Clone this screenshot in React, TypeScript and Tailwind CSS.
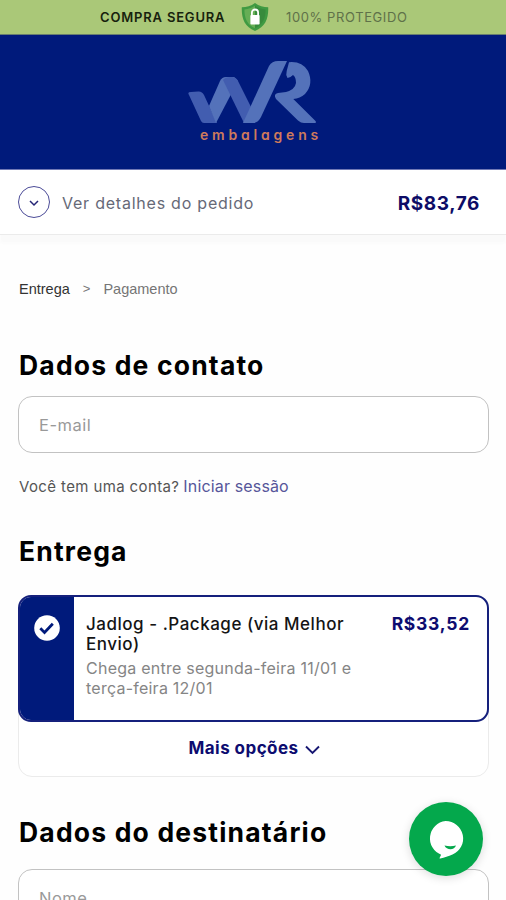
import React from 'react';

const checkoutSteps = [
  { label: 'Entrega', active: true },
  { label: 'Pagamento', active: false }
];

function ShieldIcon() {
  return (
    <svg width="28" height="30" viewBox="0 0 28 30" fill="none">
      <path d="M14 1C10 4 5.500 5 .8 5.200C.3 16 3.500 25 14 29C24.500 25 27.700 16 27.200 5.200C22.500 5 18 4 14 1Z" fill="#3f9a42" />
      <path d="M14 3.800C10.800 6.100 7.200 7.200 3.400 7.500C3.400 16 6 22.700 14 26.200Z" fill="#66ae55" />
      <path d="M14 3.800C17.200 6.100 20.800 7.200 24.600 7.500C24.600 16 22 22.700 14 26.200Z" fill="#388b3c" />
      <path d="M10.900 14V10.600a3.100 3.100 0 0 1 6.200 0V14" stroke="#fff" strokeWidth="1.800" />
      <rect x="9.400" y="13" width="9.200" height="9.500" rx=".8" fill="#fff" />
    </svg>
  );
}

function BrandLogo() {
  return (
    <div className="flex flex-col items-center">
      <svg width="130" height="64" viewBox="0 0 130 64" fill="none">
        <path d="M1 34Q-1 31 3 31L10 30.500Q14 30 16 34L29 62H16Q14 62 13 60Z" fill="#425db0" />
        <path d="M21 45L32 20Q34 16 38 16H46L50 20L28 62Z" fill="#5472ba" />
        <path d="M35 19Q37 16 42 16H44Q48 16 50 20L63 46L56 62Z" fill="#425db0" />
        <path d="M55 62L81 5Q84 0 90 0H99L73 56Q70 62 65 62Z" fill="#5472ba" />
        <path d="M101 1.200Q114 0 120 10Q126 23 117 33Q112 37.500 105.300 38L127.500 60Q129 62 126 62H116Q113 62 110 59.500L88 38Q85 33 90 32L98 31Q107 28.500 108 22Q108 16 105 14Q102 17 99.500 17Q97.500 14 98.700 10Z" fill="#5472ba" />
      </svg>
      <span className="mt-[1px] pl-[16px] text-[14px] font-semibold leading-[18px] tracking-[3.800px] text-[#cf7a5c] [font-feature-settings:'cv11']">embalagens</span>
    </div>
  );
}

function TopBar() {
  return (
    <div className="flex h-[35px] items-center border-b border-[#677e70] bg-[#aac878] pl-[100px] text-[13px]">
      <span className="mt-[2px] w-[126px] whitespace-nowrap font-semibold tracking-[0.820px] text-[#17220d]">COMPRA SEGURA</span>
      <div className="ml-[15px]">
        <ShieldIcon />
      </div>
      <span className="ml-[17px] mt-[2px] whitespace-nowrap tracking-[0.600px] text-[#5f7149]">100% PROTEGIDO</span>
    </div>
  );
}

function OrderSummary() {
  return (
    <div className="flex h-[65px] items-center border-b border-[#ebebeb] bg-white pl-[18px] pr-[26px] shadow-[0_8px_3px_#fafafa]">
      <div className="flex size-8 items-center justify-center rounded-full border-[1.500px] border-[#4c4c98]">
        <svg className="mt-[3px]" width="10" height="7" viewBox="0 0 10 7" fill="none">
          <path d="M1 1l4 4 4-4" stroke="#252576" strokeWidth="1.500" />
        </svg>
      </div>
      <span className="ml-[12px] mt-[2px] text-[16px] tracking-[0.770px] text-[#666977]">Ver detalhes do pedido</span>
      <span className="ml-auto mt-[5px] text-[19px] font-bold tracking-[0.600px] text-[#0d0c66]">R$83,76</span>
    </div>
  );
}

function Breadcrumb() {
  return (
    <nav className="mt-[44px] flex items-center pl-px font-['Liberation_Sans',sans-serif] text-[14.500px] leading-5">
      {checkoutSteps.map((step, index) => (
        <React.Fragment key={step.label}>
          {index > 0 && <span className="mx-[13px] text-[13px] text-[#777]">&gt;</span>}
          <span className={step.active ? 'text-[#333]' : 'text-[#757575]'}>{step.label}</span>
        </React.Fragment>
      ))}
    </nav>
  );
}

function SectionTitle({ children }: { children: React.ReactNode }) {
  return <h2 className="pl-px text-[26.500px] font-bold leading-8 tracking-[1.180px]">{children}</h2>;
}

function TextField({ label }: { label: string }) {
  return (
    <input
      type="text"
      placeholder={label}
      className="block h-[57px] w-full rounded-[14px] border-[1.500px] border-[#c2c2c2] bg-white px-[20px] text-[16.500px] tracking-[0.500px] outline-none placeholder:text-[#999]"
    />
  );
}

function ShippingCard() {
  return (
    <div className="h-[182px] rounded-[14px] border border-[#ebebeb] bg-white">
      <div className="-mx-px -mt-px flex h-[127px] overflow-hidden rounded-[13px] border-2 border-[#15207c] bg-white">
        <div className="flex w-[54px] justify-center bg-[#001a7b] pt-[18px]">
          <svg width="26" height="26" viewBox="0 0 26 26" fill="none">
            <circle cx="13" cy="13" r="12.800" fill="#fff" />
            <path d="M6.300 13.300l4.200 4.100 8.300-8.600" stroke="#001a7b" strokeWidth="2.800" />
          </svg>
        </div>
        <div className="ml-[12px] mt-[17px] whitespace-nowrap">
          <p className="text-[17px] font-medium leading-[20px] tracking-[0.520px] text-[#141414]">
            Jadlog - .Package (via Melhor<br />Envio)
          </p>
          <p className="mt-[4px] text-[16px] leading-[20px] tracking-[0.240px] text-[#858585]">
            Chega entre segunda-feira 11/01 e<br />terça-feira 12/01
          </p>
        </div>
        <span className="ml-auto mr-[17px] mt-[16px] text-[17.500px] font-bold leading-[22px] tracking-[0.750px] text-[#0d0c70]">R$33,52</span>
      </div>
      <button className="flex h-[53px] w-full items-center justify-center pl-px text-[17px] font-bold tracking-[0.450px] text-[#0d0c70]">
        <span>Mais opções</span>
        <svg className="ml-[6px] mt-[2px]" width="15" height="10" viewBox="0 0 15 10" fill="none">
          <path d="M1 1.500l6.500 6.500L14 1.500" stroke="#171772" strokeWidth="1.900" />
        </svg>
      </button>
    </div>
  );
}

function ChatButton() {
  return (
    <button className="absolute left-[409px] top-[802px] size-[74px] rounded-full bg-[#04a84c] shadow-[0_2px_10px_rgba(0,0,0,0.14)]">
      <svg width="74" height="74" viewBox="0 0 74 74" fill="none">
        <path d="M36.500 19a17.500 17.500 0 0 1 7 33.600C39.500 54.200 35.500 55.700 31.300 56.500C30.500 56.600 30.300 56 30.800 55.400L32.100 52.700A17.500 17.500 0 0 1 36.500 19Z" fill="#fff" />
        <path d="M35.500 43.500c4 1 7.500 1 11.500 0c-1.400 4.900-9.500 5-11.500 0Z" fill="#04a84c" />
      </svg>
    </button>
  );
}

export default function App() {
  return (
    <div className="relative h-[900px] w-full overflow-hidden bg-[#fefefe] font-[Inter,sans-serif] text-black">
      <TopBar />
      <header className="flex h-[135px] justify-center border-b border-[#7078b5] bg-[#001a7b] pt-[26px]">
        <BrandLogo />
      </header>
      <OrderSummary />
      <main className="pl-[18px] pr-[17px]">
        <Breadcrumb />
        <div className="mt-[50px]">
          <SectionTitle>Dados de contato</SectionTitle>
        </div>
        <div className="mt-[15px]">
          <TextField label="E-mail" />
        </div>
        <p className="mt-[22px] flex items-baseline pl-px text-[15px] leading-[22px] tracking-[0.380px] text-[#555]">
          <span>Você tem uma conta?</span>
          <a className="ml-[4px] text-[16px] tracking-[0.150px] text-[#56569a]">Iniciar sessão</a>
        </p>
        <div className="mt-[37px]">
          <SectionTitle>Entrega</SectionTitle>
        </div>
        <div className="mt-[28px]">
          <ShippingCard />
        </div>
        <div className="mt-[39px]">
          <SectionTitle>Dados do destinatário</SectionTitle>
        </div>
        <div className="mt-[21px]">
          <TextField label="Nome" />
        </div>
      </main>
      <ChatButton />
    </div>
  );
}
